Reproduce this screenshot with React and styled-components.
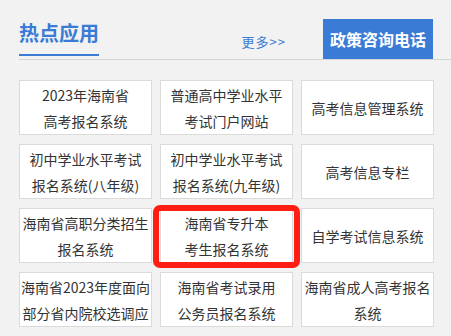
import React from 'react';
import styled, { createGlobalStyle } from 'styled-components';

const GlobalStyle = createGlobalStyle`
  html, body {
    margin: 0;
    padding: 0;
    background: #f2f2f2;
    font-family: "Noto Sans CJK SC", "Liberation Sans", sans-serif;
  }
`;

const Page = styled.div`
  width: 451px;
  height: 336px;
  overflow: hidden;
  padding: 19px 0 0 19px;
  box-sizing: border-box;
`;

const Header = styled.div`
  display: flex;
  align-items: flex-end;
  height: 40px;
  padding-right: 18px;
  border-bottom: 1px solid #d6d6d6;
`;

const Title = styled.div`
  font-size: 20px;
  line-height: 26px;
  font-weight: bold;
  color: #3a7bd5;
  padding-bottom: 8px;
  border-bottom: 2px solid #3a7bd5;
  margin-bottom: 3px;
`;

const More = styled.a`
  margin-left: auto;
  margin-right: 37px;
  margin-bottom: 9px;
  font-size: 13px;
  line-height: 16px;
  letter-spacing: 1px;
  color: #3a7bd5;
  text-decoration: none;
`;

const HotlineButton = styled.div`
  width: 110px;
  height: 40px;
  display: flex;
  align-items: center;
  justify-content: center;
  background: #3a7bd5;
  color: #fff;
  font-size: 16px;
  font-weight: bold;
`;

const Grid = styled.div`
  display: grid;
  grid-template-columns: repeat(3, 133px);
  grid-auto-rows: 55px;
  column-gap: 8px;
  row-gap: 9px;
  margin-top: 20px;
`;

const Card = styled.div`
  position: relative;
  display: flex;
  align-items: center;
  justify-content: center;
  text-align: center;
  background: #fff;
  border: 1px solid #dadada;
  box-sizing: border-box;
  font-size: 14px;
  line-height: 26px;
  color: #333;
  white-space: nowrap;
`;

const Highlight = styled.div`
  position: absolute;
  left: -8px;
  right: -8px;
  top: -4px;
  bottom: -6px;
  border: 6px solid #ff1e14;
  border-radius: 7px;
  pointer-events: none;
`;

const apps = [
  ['2023年海南省', '高考报名系统'],
  ['普通高中学业水平', '考试门户网站'],
  ['高考信息管理系统'],
  ['初中学业水平考试', '报名系统(八年级)'],
  ['初中学业水平考试', '报名系统(九年级)'],
  ['高考信息专栏'],
  ['海南省高职分类招生', '报名系统'],
  ['海南省专升本', '考生报名系统'],
  ['自学考试信息系统'],
  ['海南省2023年度面向', '部分省内院校选调应'],
  ['海南省考试录用', '公务员报名系统'],
  ['海南省成人高考报名', '系统'],
];

export default function App() {
  return (
    <Page>
      <GlobalStyle />
      <Header>
        <Title>热点应用</Title>
        <More href="#">更多&gt;&gt;</More>
        <HotlineButton>政策咨询电话</HotlineButton>
      </Header>
      <Grid>
        {apps.map((lines, i) => (
          <Card key={i}>
            <div>
              {lines.map((l, j) => (
                <div key={j}>{l}</div>
              ))}
            </div>
            {i === 7 && <Highlight />}
          </Card>
        ))}
      </Grid>
    </Page>
  );
}
